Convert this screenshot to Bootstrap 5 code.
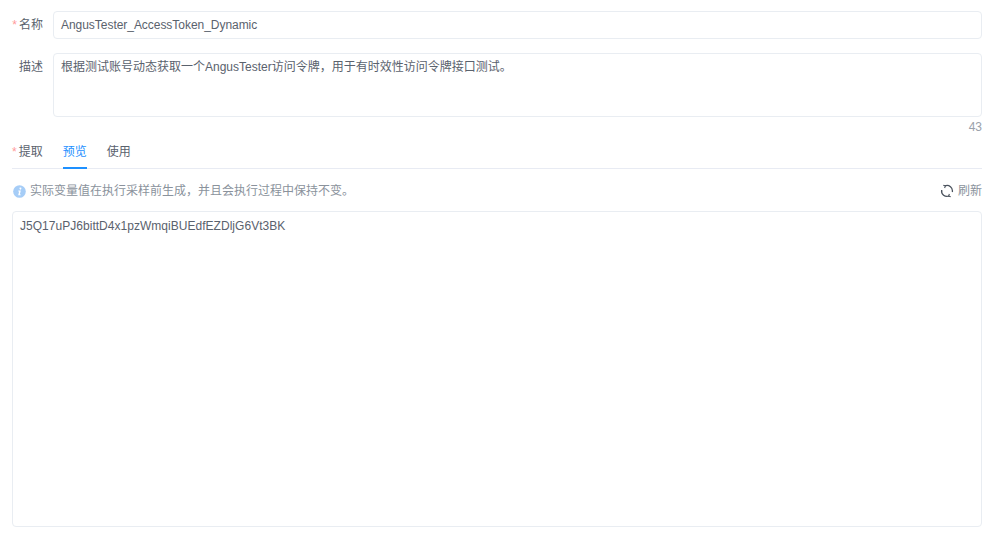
<!doctype html>
<html lang="zh">
<head>
<meta charset="utf-8">
<link href="https://cdn.jsdelivr.net/npm/bootstrap@5.3.0/dist/css/bootstrap.min.css" rel="stylesheet">
<style>
html,body{height:100%;overflow:hidden}
body{font-family:"Liberation Sans","Noto Sans CJK SC",sans-serif;font-size:12px;line-height:20px;color:#5a626d;background:#fff}
.pg{padding:11px 16px 0 12px;width:998px}
.lbl{width:41px;flex:none;padding-right:10px;text-align:right;white-space:nowrap}
.req{color:#ff9a9a;margin-right:2px}
.inp{border:1px solid #e9edf2;border-radius:4px;padding:3px 7px;height:28px;flex:1 1 0;min-width:0}
.ta{height:64px}
.row2{margin-top:14px}
.nm{letter-spacing:-.04px}
.tok{letter-spacing:.03px}
.cnt{color:#9aa1aa;height:20px}
.tabsrow{border-bottom:1px solid #e8ebf3;height:32px}
.tb{padding:5px 0 0;height:32px;margin-right:20px}
.tb.on{color:#1e90ff;border-bottom:2px solid #1e90ff}
.hint{color:#8a929c;height:20px;margin-top:12px}
.dot{width:13px;height:13px;margin-left:1px;margin-right:4px;flex:none}
.rf svg{margin-right:4px}
.out{border:1px solid #e9edf2;border-radius:4px;height:316px;margin-top:10px;padding:4px 7px}
</style>
</head>
<body>
<div class="pg">
  <div class="d-flex">
    <div class="lbl pt-1"><span class="req">*</span>名称</div>
    <div class="inp"><span class="nm">AngusTester_AccessToken_Dynamic</span></div>
  </div>
  <div class="d-flex row2">
    <div class="lbl pt-1">描述</div>
    <div class="inp ta">根据测试账号动态获取一个AngusTester访问令牌，用于有时效性访问令牌接口测试。</div>
  </div>
  <div class="cnt text-end">43</div>
  <div class="tabsrow d-flex">
    <div class="tb"><span class="req">*</span>提取</div>
    <div class="tb on">预览</div>
    <div class="tb">使用</div>
  </div>
  <div class="hint d-flex align-items-center justify-content-between">
    <div class="d-flex align-items-center">
      <svg class="dot" viewBox="0 0 14 14"><circle cx="7" cy="7" r="6.8" fill="#a6cdf7"/><path d="M8 2.8a1 1 0 1 1-.01 0zM5.8 6h2.6L7.4 10.1h1v.9H5.6L6.6 6.9h-1z" fill="#fff"/></svg>
      <span>实际变量值在执行采样前生成，并且会执行过程中保持不变。</span>
    </div>
    <div class="rf d-flex align-items-center">
      <svg width="14" height="14" viewBox="0 0 14 14" fill="none" stroke="#4a525d" stroke-width="1.3"><path d="M5 1.9A5.4 5.4 0 0 1 12.3 8"/><path d="M9 12A5.4 5.4 0 0 1 1.7 6"/><path d="M3.3 1.2 5.4 1.9 4.6 4" stroke-width="1.1"/><path d="M10.7 12.8 8.6 12.1 9.4 10" stroke-width="1.1"/></svg>
      <span>刷新</span>
    </div>
  </div>
  <div class="out"><span class="tok">J5Q17uPJ6bittD4x1pzWmqiBUEdfEZDljG6Vt3BK</span></div>
</div>
<script src="https://cdn.jsdelivr.net/npm/bootstrap@5.3.0/dist/js/bootstrap.bundle.min.js"></script>
</body>
</html>
